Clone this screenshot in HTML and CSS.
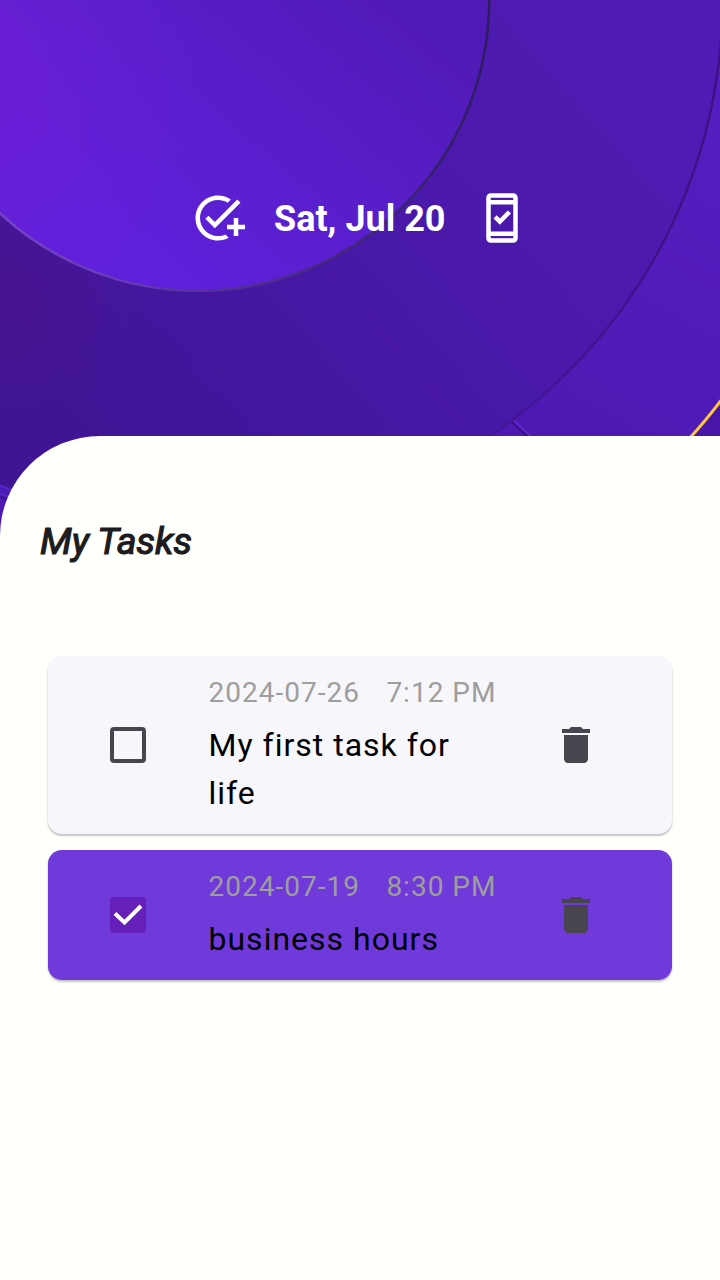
FILE: index.html
```html
<!DOCTYPE html>
<html lang="en">
<head>
<meta charset="utf-8">
<title>My Tasks</title>
<link rel="stylesheet" href="styles.css">
</head>
<body>
<main class="screen">
  <svg class="backdrop" viewBox="0 0 720 560" aria-hidden="true">
    <defs>
      <linearGradient id="outer" gradientUnits="userSpaceOnUse" x1="720" y1="160" x2="560" y2="440">
        <stop offset="0" stop-color="#541dbf"/><stop offset="1" stop-color="#4e19b2"/>
      </linearGradient>
      <linearGradient id="ring" gradientUnits="userSpaceOnUse" x1="90" y1="450" x2="600" y2="0">
        <stop offset="0" stop-color="#3f1595"/><stop offset=".5" stop-color="#4818a7"/><stop offset="1" stop-color="#501bb4"/>
      </linearGradient>
      <linearGradient id="disc" gradientUnits="userSpaceOnUse" x1="160" y1="290" x2="410" y2="0">
        <stop offset="0" stop-color="#5f20dc"/><stop offset=".55" stop-color="#581ec9"/><stop offset="1" stop-color="#501ab6"/>
      </linearGradient>
      <radialGradient id="glow" gradientUnits="userSpaceOnUse" cx="-60" cy="80" r="260">
        <stop offset="0" stop-color="#7d1bd0" stop-opacity=".5"/><stop offset="1" stop-color="#7d1bd0" stop-opacity="0"/>
      </radialGradient>
      <radialGradient id="ringGlow" gradientUnits="userSpaceOnUse" cx="10" cy="300" r="130">
        <stop offset="0" stop-color="#4b148f" stop-opacity=".7"/><stop offset="1" stop-color="#4b148f" stop-opacity="0"/>
      </radialGradient>
      <linearGradient id="rim" gradientUnits="userSpaceOnUse" x1="0" y1="0" x2="490" y2="0">
        <stop offset="0" stop-color="#7442c6"/><stop offset=".25" stop-color="#683ab9"/><stop offset=".45" stop-color="#54309a"/><stop offset=".65" stop-color="#442b80"/><stop offset="1" stop-color="#2d1c62"/>
      </linearGradient>
      <linearGradient id="outerRim" gradientUnits="userSpaceOnUse" x1="0" y1="0" x2="720" y2="0">
        <stop offset="0" stop-color="#5423c6"/><stop offset=".65" stop-color="#431798"/><stop offset="1" stop-color="#3b1285"/>
      </linearGradient>
    </defs>
    <rect width="720" height="560" fill="url(#outer)"/>
    <circle cx="198" cy="0" r="524.500" fill="url(#ring)" stroke="url(#outerRim)" stroke-width="2.5"/>
    <path d="M0 490l20 8" stroke="#4a1cb4" stroke-width="5"/>
    <path d="M0 493.500l20 8" stroke="#5423c6" stroke-width="2"/>
    <path d="M0 496.500l20 8" stroke="#3b1491" stroke-width="2.500"/>
    <rect y="170" width="140" height="260" fill="url(#ringGlow)"/>
    <circle cx="198" cy="-1" r="291" fill="url(#disc)"/>
    <circle cx="198" cy="-0.5" r="291.300" fill="url(#glow)" stroke="url(#rim)" stroke-width="2.6"/>
    <path d="M514 421l17 16" stroke="#5a25ca" stroke-width="3"/>
    <path d="M512 422l16 15" stroke="#381087" stroke-width="2.2"/>
    <path d="M720 402v34h-28z" fill="#4716a8"/>
    <path d="M722 399q-14 19-34 41" fill="none" stroke="#ffc83d" stroke-width="3"/>
  </svg>

  <header class="header">
    <svg class="header-icon" viewBox="0 0 24 24"><path d="M22 5.18 10.59 16.6l-4.24-4.24 1.41-1.41 2.83 2.83 10-10L22 5.18zM12 20c-4.41 0-8-3.59-8-8s3.59-8 8-8c1.57 0 3.04.46 4.28 1.25l1.45-1.45A9.93 9.93 0 0 0 12 2C6.48 2 2 6.48 2 12s4.48 10 10 10c1.73 0 3.36-.44 4.78-1.22l-1.5-1.5c-1 .46-2.11.72-3.28.72zm7-5h-3v2h3v3h2v-3h3v-2h-3v-3h-2v3z"/></svg>
    <h1 class="date">Sat, Jul 20</h1>
    <svg class="header-icon" viewBox="0 0 24 24"><path d="M17 1.01 7 1c-1.1 0-2 .9-2 2v18c0 1.1.9 2 2 2h10c1.1 0 2-.9 2-2V3c0-1.1-.9-1.99-2-1.99zM17 21H7v-1h10v1zm0-3H7V6h10v12zM7 4V3h10v1H7zm9 6.05-1.41-1.41-3.54 3.54-1.41-1.41-1.41 1.41L11.05 15 16 10.05z"/></svg>
  </header>

  <section class="sheet">
    <h2 class="title">My Tasks</h2>
    <ul class="tasks">
      <li class="card">
        <span class="checkbox"></span>
        <div class="details">
          <div class="when"><span>2024-07-26</span><span>7:12 PM</span></div>
          <div class="name">My first task for life</div>
        </div>
        <svg class="trash" viewBox="0 0 24 24"><path d="M6 19c0 1.1.9 2 2 2h8c1.1 0 2-.9 2-2V7H6v12zM19 4h-3.500l-1-1h-5l-1 1H5v2h14V4z"/></svg>
      </li>
      <li class="card done">
        <span class="checkbox"><svg viewBox="0 0 36 36"><path d="M5 16.500l9.500 9L31 9"/></svg></span>
        <div class="details">
          <div class="when"><span>2024-07-19</span><span>8:30 PM</span></div>
          <div class="name">business hours</div>
        </div>
        <svg class="trash" viewBox="0 0 24 24"><path d="M6 19c0 1.1.9 2 2 2h8c1.1 0 2-.9 2-2V7H6v12zM19 4h-3.500l-1-1h-5l-1 1H5v2h14V4z"/></svg>
      </li>
    </ul>
  </section>
</main>
</body>
</html>
```
FILE: styles.css
```css
* { box-sizing: border-box; }
body { margin: 0; font-family: Roboto, sans-serif; background: #fffffb; }
.screen { position: relative; width: 720px; height: 1280px; overflow: hidden; display: flex; flex-direction: column; }
.backdrop { position: absolute; top: 0; left: 0; width: 720px; height: 560px; }
.header { position: relative; height: 436px; padding-left: 191px; display: flex; align-items: center; color: #fff; }
.header-icon { width: 54px; height: 54px; fill: currentColor; }
.date { margin: 0; padding: 2px 0 0 29px; width: 230px; font-size: 36px; font-weight: 700; line-height: 44px; white-space: nowrap; }
.sheet { position: relative; flex: 1; background: #fffffb; border-top-left-radius: 100px; padding: 82px 48px 0; }
.title { margin: 0 0 0 -8px; height: 48px; font-size: 37.5px; line-height: 46px; letter-spacing: -.1px; font-weight: 400; font-style: italic; color: #1d1b20; -webkit-text-stroke: 1.2px #1d1b20; }
.tasks { list-style: none; margin: 90px 0 0; padding: 0; display: grid; gap: 16px; }
.card { display: grid; grid-template-columns: 160.5px 288px 1fr; align-items: center; min-height: 130px; padding: 17px 0; border-radius: 14px; background: #f7f6fb; box-shadow: 0 2px 2px rgba(0,0,0,.2), 0 1px 3px rgba(0,0,0,.08); }
.done { background: #703adb; }
.checkbox { width: 36px; height: 36px; margin-left: 62px; border: 4px solid #49454f; border-radius: 4px; }
.done .checkbox { border: 0; background: #6520b9; }
.checkbox svg { display: block; width: 36px; height: 36px; fill: none; stroke: #fff; stroke-width: 4; }
.when { display: flex; gap: 26.5px; height: 40px; margin-bottom: 8px; font-size: 28px; line-height: 40px; letter-spacing: 1px; color: #9e9e9e; white-space: nowrap; }
.name { font-size: 32px; line-height: 48px; letter-spacing: 1px; color: #000; }
.trash { width: 48px; height: 48px; margin-left: 55.5px; fill: #49454f; }
```
